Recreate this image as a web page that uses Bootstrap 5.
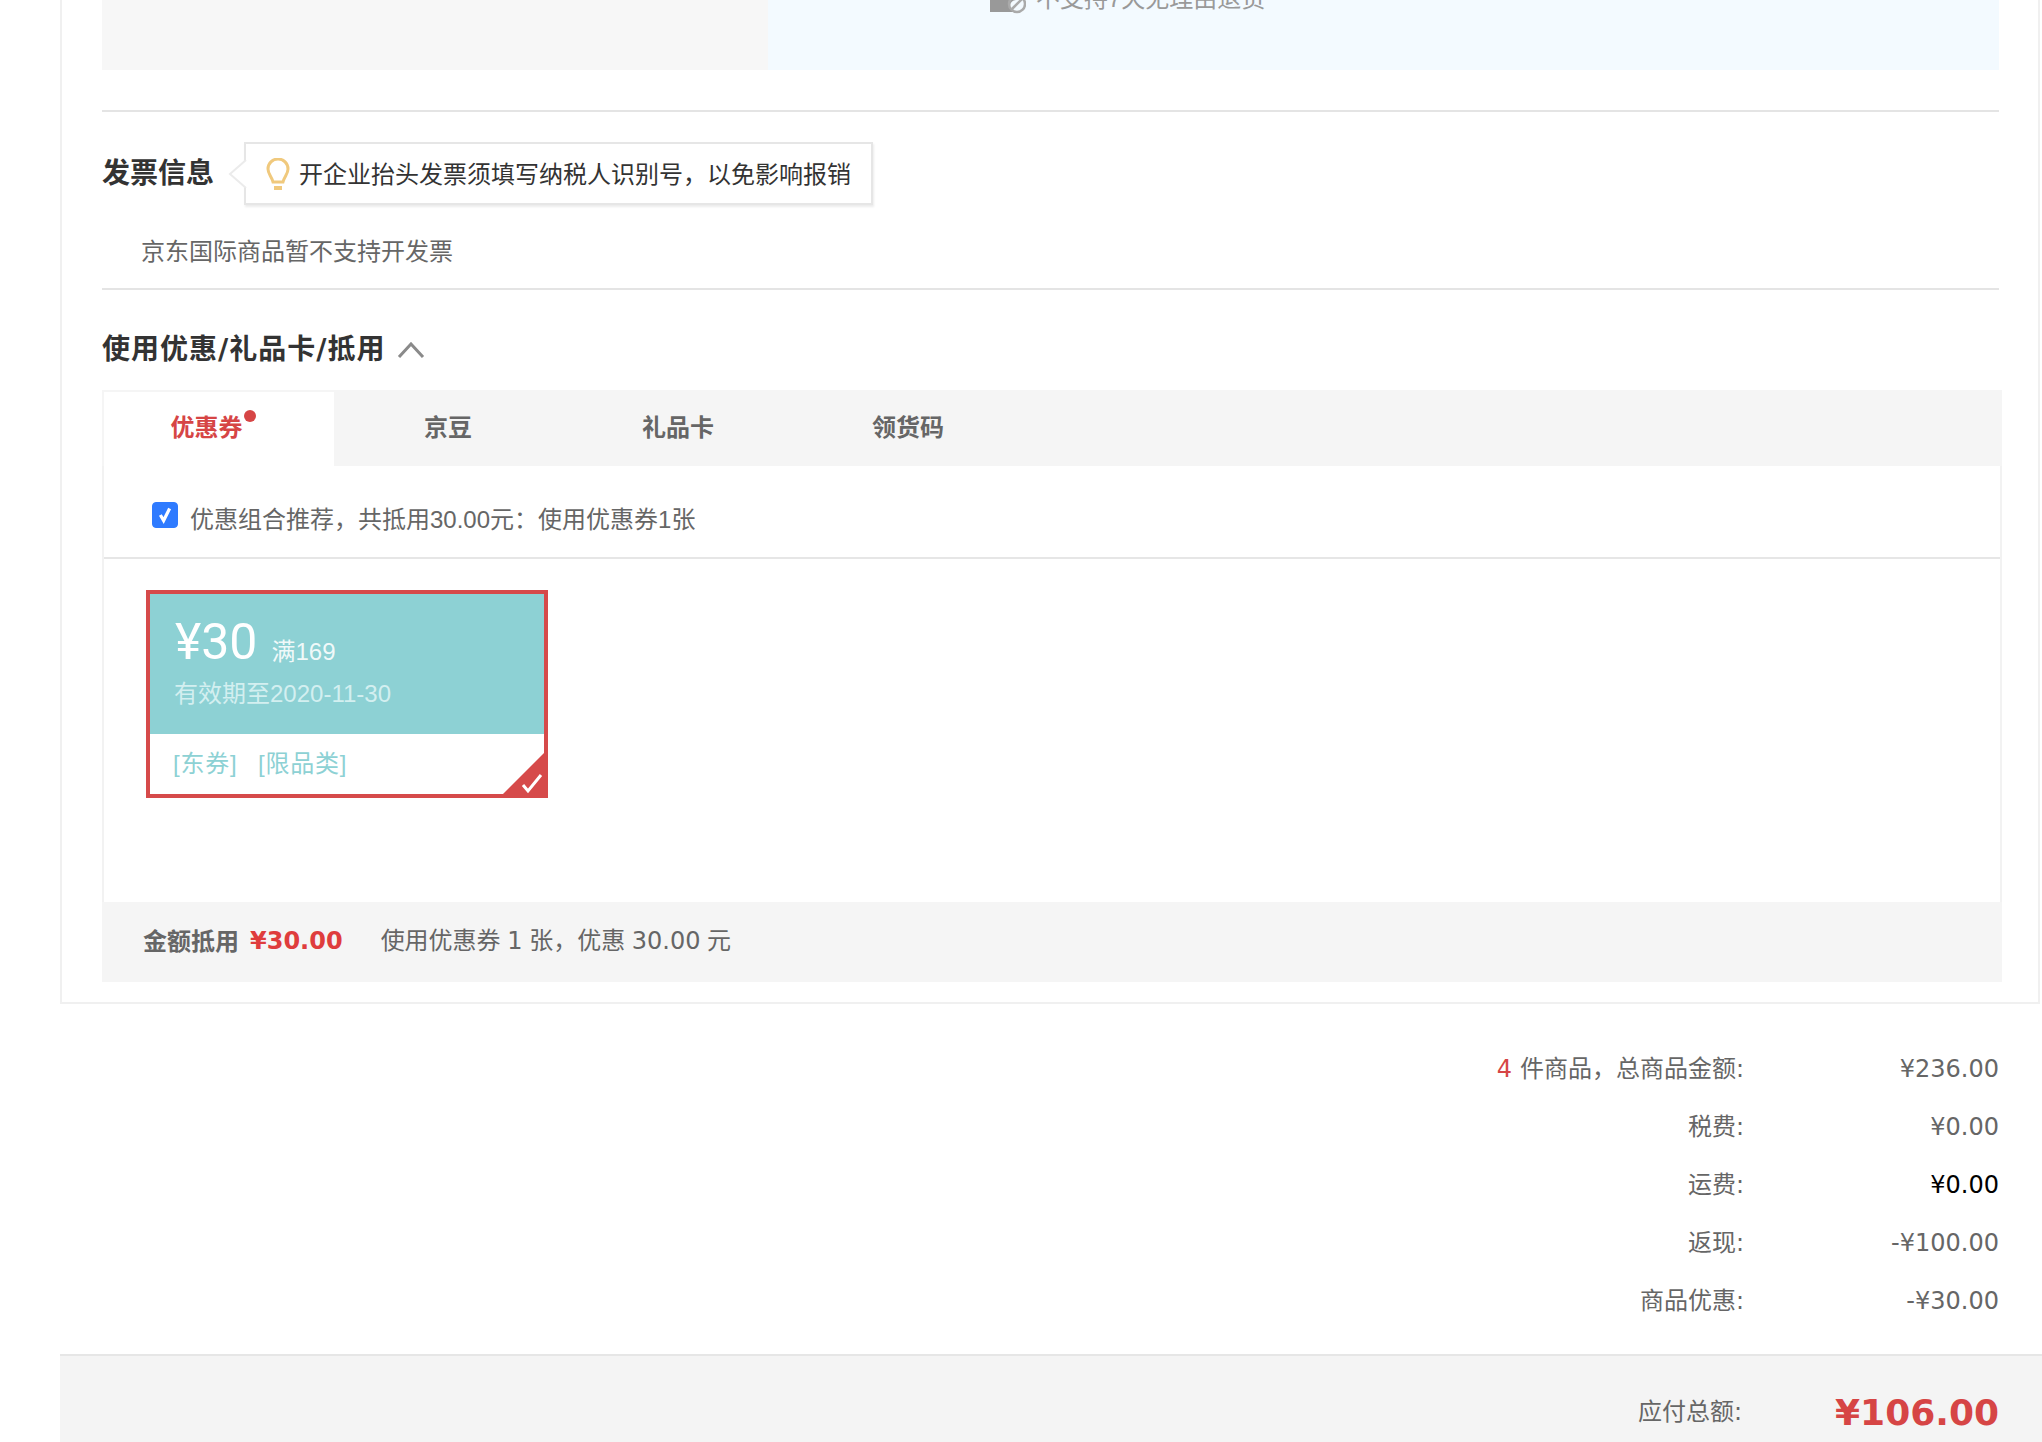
<!DOCTYPE html>
<html lang="zh-CN">
<head>
<meta charset="utf-8">
<title>订单结算</title>
<link rel="stylesheet" href="https://cdn.jsdelivr.net/npm/bootstrap@5.3.0/dist/css/bootstrap.min.css">
<style>
html,body{height:1442px;overflow:hidden;background:#fff}
body{font-family:"Liberation Sans","Noto Sans CJK SC",sans-serif;font-size:24px;color:#666;line-height:1.4}
.wide-font{font-family:"DejaVu Sans","Noto Sans CJK SC",sans-serif}
.order-panel{margin-left:60px;width:1980px;border:2px solid #f0f0f0;border-top:0;padding:0 36px 20px 40px}
.strip{height:70px;margin-right:3px}
.strip-left{width:666px;background:#f7f7f7}
.strip-right{background:#f3faff;color:#999}
.strip-text{margin-top:-23px;margin-left:222px;height:43px;gap:10px}
.rule{height:2px;background:#e4e4e4;margin-right:3px}
.rule-first{margin-top:40px}
.invoice{height:176px;padding-top:30px}
.sec-title{font-size:28px;font-weight:700;color:#333;line-height:40px}
.tip-box{position:relative;margin-left:30px;width:629px;height:63px;border:2px solid #e6e6e6;box-shadow:1px 2px 2px rgba(0,0,0,.08);background:#fff;color:#333;padding:2px 0 0 20px;gap:9px}
.tip-arrow{position:absolute;left:-18px;top:16px}
.invoice-note{margin:30px 0 0 39px;line-height:34px}
.use-head{height:100px;padding-top:20px}
.use-title{font-family:"DejaVu Sans","Noto Sans CJK SC",sans-serif;letter-spacing:1px}
.tabs-box{width:1900px}
.tab-row{background:#f5f5f5;height:76px;padding:2px 0 0 2px}
.tab-item{width:230px;height:74px;display:flex;align-items:center;justify-content:center;font-weight:700;color:#666;position:relative;padding:0 2px 2px 0}
.tab-item.chosen{background:#fff;color:#d64545;padding-right:25px}
.tab-dot{position:absolute;left:140px;top:18px;width:12px;height:12px;border-radius:50%;background:#d64545}
.tab-body{border-left:2px solid #f2f2f2;border-right:2px solid #f2f2f2}
.combo-row{height:93px;padding:16px 0 0 48px;gap:12px;border-bottom:2px solid #e6e6e6}
.form-check-input.combo-check,.form-check-input.combo-check:checked{width:26px;height:26px;margin:0 0 10px 0;border-radius:4px;background-color:#2f7bff;border-color:#2f7bff;flex:none;background-size:100%;background-image:url("data:image/svg+xml,%3csvg xmlns='http://www.w3.org/2000/svg' viewBox='0 0 26 26'%3e%3cpath fill='none' stroke='%23fff' stroke-width='3.5' d='M8 13l3.500 6L18 6'/%3e%3c/svg%3e")}
.coupon-area{height:343px;padding:31px 0 0 42px}
.coupon-box{position:relative;width:402px;height:208px;border:4px solid #d64a4a}
.coupon-top{height:140px;background:#8dd1d4;padding:18px 0 0 25px;color:#fff}
.coupon-amt{font-family:Roboto,"Liberation Sans",sans-serif;font-size:50px;line-height:60px}
.coupon-min{margin:0 0 5px 14px;line-height:30px;color:rgba(255,255,255,.88)}
.coupon-date{color:#d3eff0;line-height:34px;margin:5px 0 0 -1px}
.coupon-tags{color:#8dd1d4;padding:13px 0 0 23px;line-height:34px;word-spacing:13px;letter-spacing:.8px}
.coupon-corner{position:absolute;right:-4px;bottom:-4px}
.sum-bar{background:#f5f5f5;height:80px;padding-left:41px;width:1900px}
.sum-bar b{color:#666;font-family:"Liberation Sans","Noto Sans CJK SC",sans-serif}
.sum-red{color:#df3d3d;font-weight:700;margin:0 38px 0 11px}
.sum-note{word-spacing:-1px}
.sum-rows{margin-top:37px;padding-right:43px}
.sum-line{height:58px;justify-content:flex-end}
.sum-val{width:255px;text-align:right}
.sum-four{color:#d64545;margin-right:8px}
.total-bar{margin:23px 0 0 60px;height:88px;background:#f4f4f4;border-top:2px solid #e6e6e6;padding:28px 43px 0 0;justify-content:flex-end}
.total-val{width:257px;text-align:right;font-size:36px;font-weight:700;color:#d64545}
</style>
</head>
<body>
<div class="order-panel">
  <div class="strip d-flex">
    <div class="strip-left"></div>
    <div class="strip-right flex-grow-1">
      <div class="strip-text d-flex align-items-center">
        <svg width="36" height="30" viewBox="0 0 36 30"><path d="M0 4h26v12a6 6 0 0 0 0 12H0z" fill="#999"/><circle cx="27" cy="20" r="8" fill="none" stroke="#aaa" stroke-width="2.5"/><path d="M22 25l10-10" stroke="#aaa" stroke-width="2.5"/></svg>
        <span>不支持7天无理由退货</span>
      </div>
    </div>
  </div>
  <div class="rule rule-first"></div>
  <section class="invoice">
    <div class="d-flex align-items-center">
      <div class="sec-title">发票信息</div>
      <div class="tip-box d-flex align-items-center">
        <svg class="tip-arrow" width="20" height="28" viewBox="0 0 20 28"><path d="M18 0L2 14l16 14h2V0z" fill="#fff"/><path d="M18 0L2 14l16 14" fill="none" stroke="#ebebeb" stroke-width="2"/></svg>
        <svg width="24" height="34" viewBox="0 0 24 34"><path d="M7 24C5.500 18 2 16 2 11a10 10 0 0 1 20 0c0 5-3.500 7-5 13z" fill="none" stroke="#f0c97d" stroke-width="3"/><rect x="8" y="28" width="8" height="4" fill="#f0c97d"/></svg>
        <span>开企业抬头发票须填写纳税人识别号，以免影响报销</span>
      </div>
    </div>
    <div class="invoice-note">京东国际商品暂不支持开发票</div>
  </section>
  <div class="rule"></div>
  <div class="use-head d-flex align-items-center gap-2">
    <div class="sec-title use-title">使用优惠/礼品卡/抵用</div>
    <svg class="ms-1" width="28" height="16" viewBox="0 0 28 16"><path d="M2 15L14 2l12 13" fill="none" stroke="#8a8a8a" stroke-width="3"/></svg>
  </div>
  <div class="tabs-box">
    <ul class="nav tab-row">
      <li class="nav-item"><a class="nav-link tab-item chosen" href="#">优惠券<span class="tab-dot"></span></a></li>
      <li class="nav-item"><a class="nav-link tab-item" href="#">京豆</a></li>
      <li class="nav-item"><a class="nav-link tab-item" href="#">礼品卡</a></li>
      <li class="nav-item"><a class="nav-link tab-item" href="#">领货码</a></li>
    </ul>
    <div class="tab-body">
      <div class="combo-row d-flex align-items-center">
        <input class="form-check-input combo-check" type="checkbox" checked aria-label="优惠组合推荐">
        <span>优惠组合推荐，共抵用30.00元：使用优惠券1张</span>
      </div>
      <div class="coupon-area">
        <div class="coupon-box">
          <div class="coupon-top">
            <div class="d-flex align-items-end"><span class="coupon-amt">¥30</span><span class="coupon-min">满169</span></div>
            <div class="coupon-date">有效期至2020-11-30</div>
          </div>
          <div class="coupon-tags">[东券] [限品类]</div>
          <svg class="coupon-corner" width="45" height="45" viewBox="0 0 45 45"><path d="M41 0H45V45H0V41z" fill="#d64a4a"/><path d="M20 32l5 6 13-16" fill="none" stroke="#fff" stroke-width="3"/></svg>
        </div>
      </div>
    </div>
    <div class="sum-bar d-flex align-items-center wide-font">
      <b class="fw-bold">金额抵用</b>
      <span class="sum-red">¥30.00</span>
      <span class="sum-note">使用优惠券 1 张，优惠 30.00 元</span>
    </div>
  </div>
</div>
<div class="sum-rows wide-font">
  <div class="sum-line d-flex align-items-center"><span><span class="sum-four">4</span>件商品，总商品金额:</span><span class="sum-val">¥236.00</span></div>
  <div class="sum-line d-flex align-items-center"><span>税费:</span><span class="sum-val">¥0.00</span></div>
  <div class="sum-line d-flex align-items-center"><span>运费:</span><span class="sum-val text-black">¥0.00</span></div>
  <div class="sum-line d-flex align-items-center"><span>返现:</span><span class="sum-val">-¥100.00</span></div>
  <div class="sum-line d-flex align-items-center"><span>商品优惠:</span><span class="sum-val">-¥30.00</span></div>
</div>
<div class="total-bar d-flex align-items-center wide-font">
  <span>应付总额:</span><span class="total-val">¥106.00</span>
</div>
</body>
</html>
